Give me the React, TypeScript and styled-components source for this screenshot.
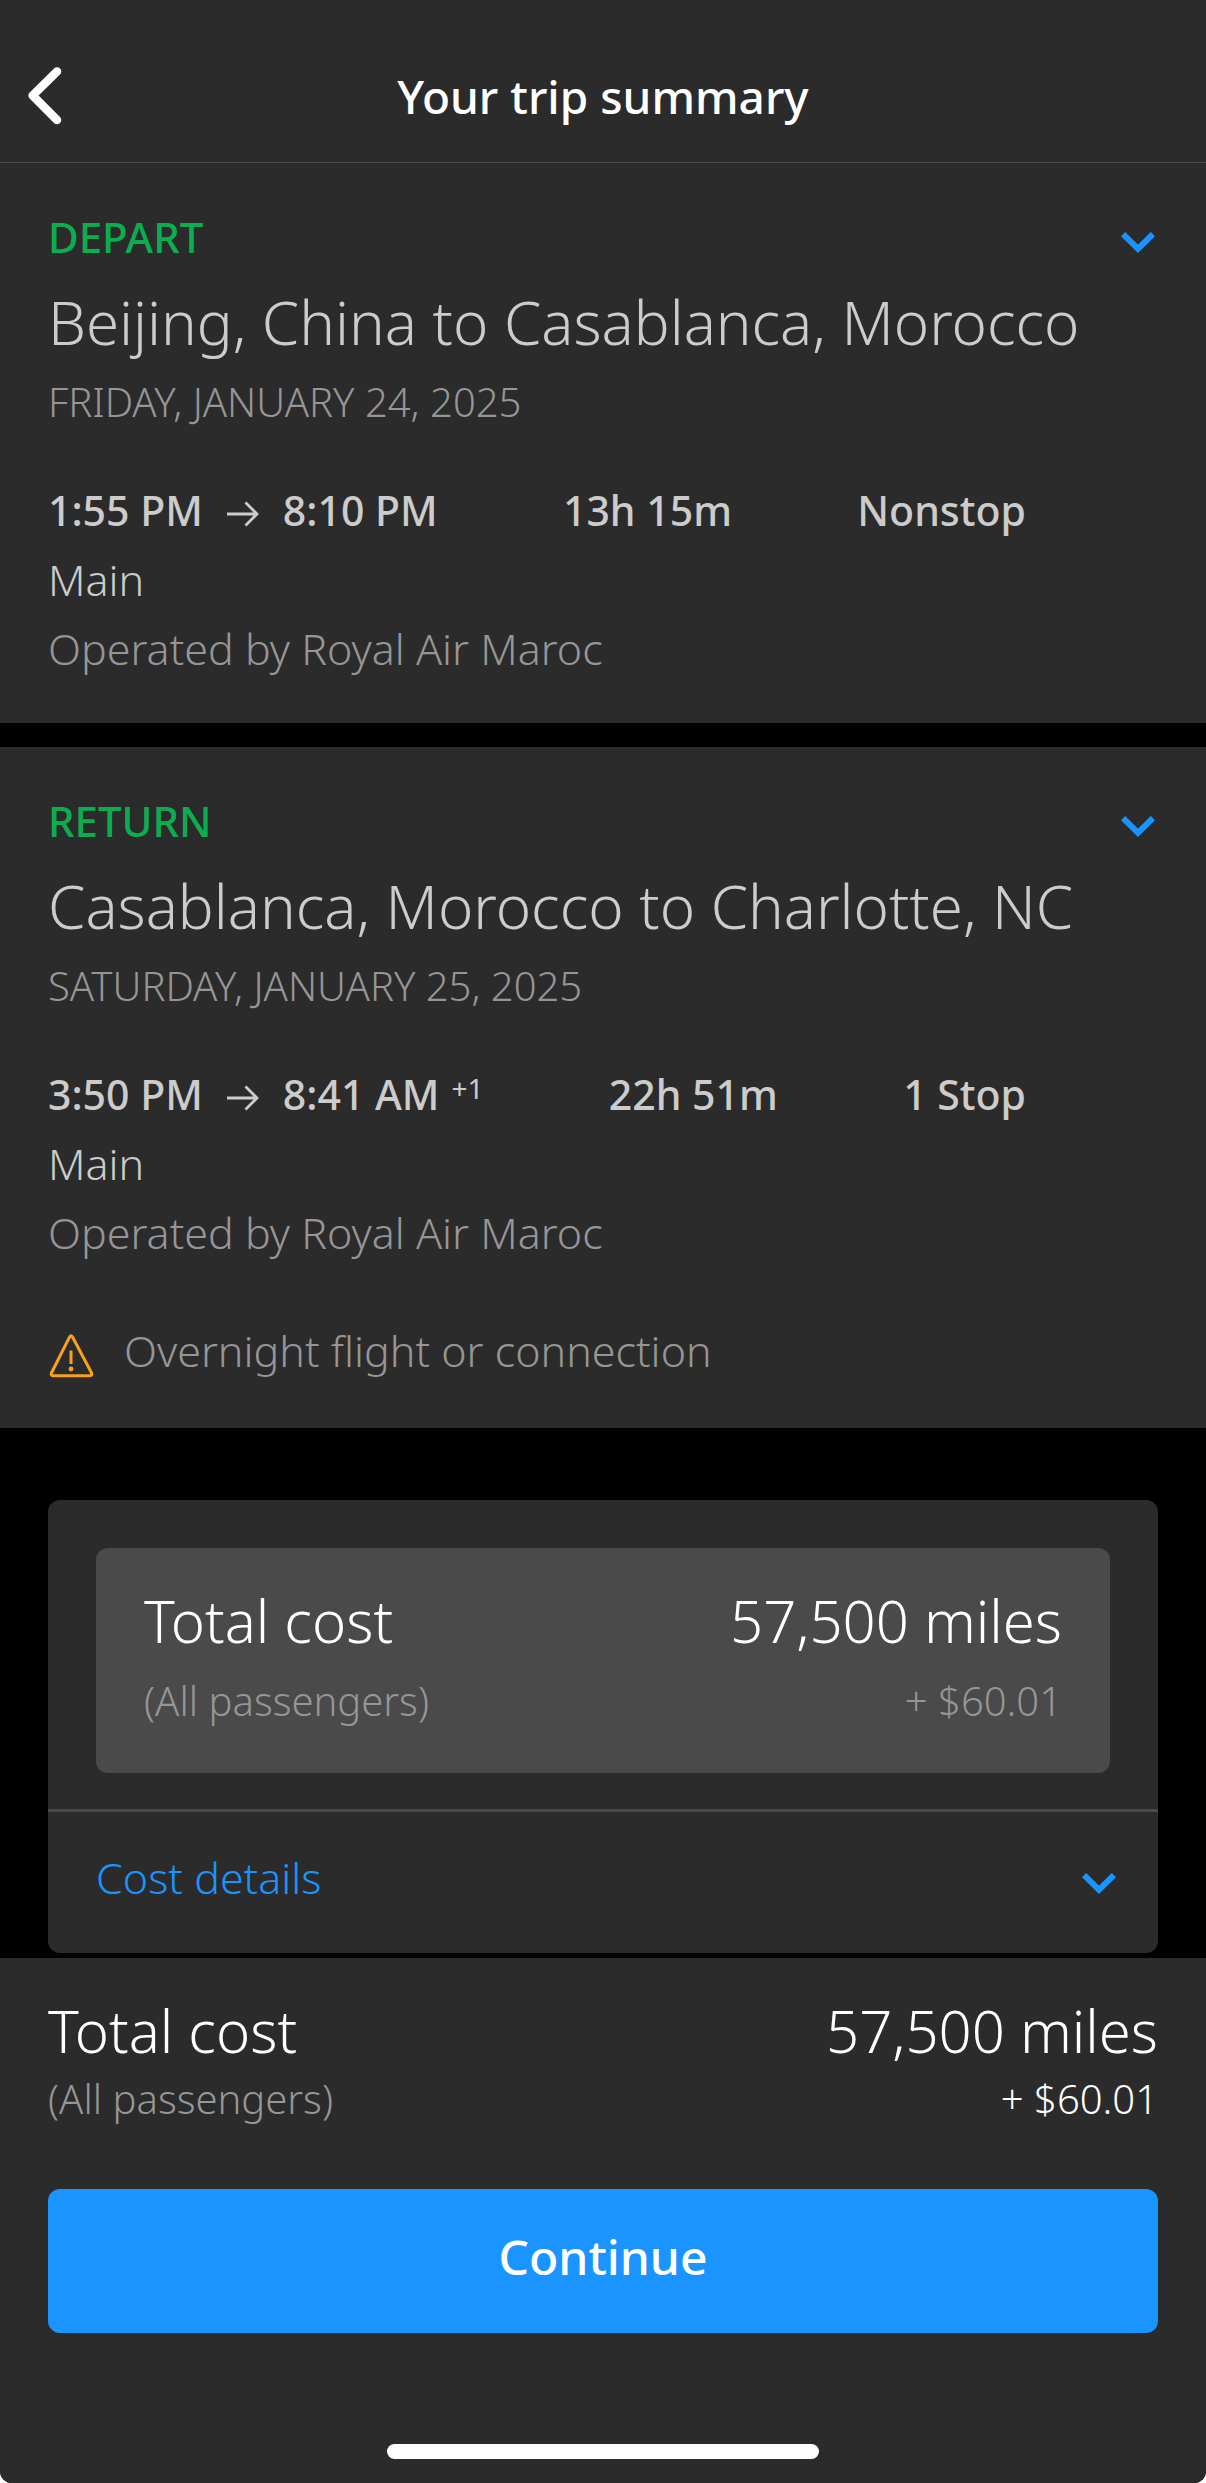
import React from 'react';
import styled, { createGlobalStyle } from 'styled-components';

const color = {
  page: '#000000',
  panel: '#2b2b2b',
  raised: '#4a4a4a',
  blue: '#1a94ff',
  green: '#0cad50',
  amber: '#f9a11b',
  white: '#ffffff',
  text: '#cccccc',
  muted: '#969696',
};

const GlobalStyle = createGlobalStyle`
  *, *::before, *::after { box-sizing: border-box; }
  body {
    margin: 0;
    background: ${color.white};
    font-family: "Noto Sans", "Open Sans", sans-serif;
    font-weight: 300;
    color: ${color.text};
  }
  h1, h2, h3, p { margin: 0; font-weight: inherit; }
  button {
    border: 0;
    padding: 0;
    background: none;
    font: inherit;
    color: inherit;
    cursor: pointer;
  }
  svg { display: block; }
`;

const Screen = styled.div`
  display: flex;
  flex-direction: column;
  min-height: 100vh;
  background: ${color.page};
  border-radius: 0 0 12px 12px;
  overflow: hidden;
`;

const Header = styled.header`
  display: grid;
  grid-template-columns: 1fr auto 1fr;
  align-items: center;
  padding: 66px 24px 36px;
  background: ${color.panel};
  border-bottom: 1px solid ${color.raised};
`;

const BackButton = styled.button`
  justify-self: start;
  padding: 0 4px;
`;

const Title = styled.h1`
  font-size: 46px;
  font-weight: 500;
  line-height: 60px;
  color: ${color.white};
`;

const Trips = styled.main`
  display: flex;
  flex-direction: column;
  gap: 24px;
`;

const Trip = styled.section`
  padding: 44px 48px 40px;
  background: ${color.panel};
`;

const TripTop = styled.div`
  display: flex;
  justify-content: space-between;
`;

const Direction = styled.h2`
  font-size: 42px;
  font-weight: 500;
  line-height: 60px;
  color: ${color.green};
`;

const ToggleButton = styled.button`
  padding: 10px 3px 0;
`;

const Route = styled.h3`
  margin-top: 15px;
  font-size: 60px;
  line-height: 80px;
`;

const TripDate = styled.p`
  margin-top: 10px;
  font-size: 40px;
  line-height: 60px;
  color: ${color.muted};
  text-transform: uppercase;
`;

const Facts = styled.div`
  display: flex;
  justify-content: space-between;
  margin-top: 44px;
  padding-right: 132px;
  font-size: 41px;
  font-weight: 500;
  line-height: 69px;
`;

const Times = styled.div`
  display: flex;
  align-items: center;
  gap: 24px;
`;

const DayShift = styled.sup`
  margin-left: 12px;
  font-size: 28px;
  font-weight: 400;
  line-height: 28px;
  vertical-align: 11px;
`;

const Line = styled.p<{ $muted?: boolean }>`
  font-size: 43px;
  line-height: 69px;
  color: ${p => (p.$muted ? color.muted : color.text)};
`;

const Notice = styled.div`
  display: flex;
  align-items: center;
  gap: 30px;
  margin-top: 49px;
  padding-bottom: 3px;

  svg { margin-top: 10px; }
`;

const CostArea = styled.div`
  padding: 72px 48px 5px;
`;

const Card = styled.section`
  border-radius: 12px;
  background: ${color.panel};
`;

const CardBody = styled.div`
  padding: 48px 48px 36px;
`;

const CostBox = styled.div`
  padding: 37px 48px 42px;
  border-radius: 12px;
  background: ${color.raised};
`;

const CostGrid = styled.div<{ $gap: number }>`
  display: flex;
  flex-direction: column;
  gap: ${p => p.$gap}px;
`;

const CostRow = styled.div`
  display: flex;
  justify-content: space-between;
`;

const Total = styled.span`
  font-size: 58px;
  line-height: 72px;
  color: ${color.white};
`;

const Detail = styled.span<{ $bright?: boolean }>`
  font-size: 40px;
  line-height: 60px;
  color: ${p => (p.$bright ? color.white : color.muted)};
`;

const CostDetails = styled.button`
  display: flex;
  justify-content: space-between;
  align-items: center;
  width: 100%;
  padding: 36px 42px 45px 48px;
  border-top: 3px solid ${color.raised};
  font-size: 43px;
  line-height: 60px;
  color: ${color.blue};

  svg { margin-top: 10px; }
`;

const Footer = styled.footer`
  flex: 1;
  padding: 37px 48px 24px;
  background: ${color.panel};
`;

const ContinueButton = styled.button`
  display: block;
  width: 100%;
  margin-top: 60px;
  padding: 36px 0 44px;
  border-radius: 12px;
  background: ${color.blue};
  font-size: 48px;
  font-weight: 500;
  line-height: 64px;
  color: ${color.white};
`;

const HomeIndicator = styled.div`
  width: 39%;
  height: 15px;
  margin: 111px auto 0;
  border-radius: 8px;
  background: ${color.white};
`;

const ChevronDown = () => (
  <svg width="34" height="21" viewBox="0 0 34 21" fill="none" stroke={color.blue} strokeWidth="6" aria-hidden="true">
    <path d="M2.1 2.1 17 16.8 31.9 2.1" />
  </svg>
);

const BackIcon = () => (
  <svg width="34" height="58" viewBox="0 0 34 58" fill="none" stroke={color.white} strokeWidth="8.5" strokeLinecap="round" strokeLinejoin="round" aria-hidden="true">
    <path d="M29 4.5 4.6 28.5 29 53" />
  </svg>
);

const ArrowIcon = () => (
  <svg width="32" height="32" viewBox="0 0 32 32" fill="none" stroke={color.text} strokeWidth="2.8" aria-label="to">
    <path d="M0 19H30M18.5 7.5 30 19 18.5 30.5" />
  </svg>
);

const WarningIcon = () => (
  <svg width="46" height="44" viewBox="0 0 46 44" fill="none" stroke={color.amber} strokeWidth="3" strokeLinejoin="round" aria-hidden="true">
    <path d="M21.6 2.8Q23 .8 24.4 2.8L43.6 39Q44.4 41.8 42 41.8H5Q2.6 41.8 3.4 39Z" />
    <path d="M23 16.5V30" />
    <circle cx="23" cy="35" r="2.4" fill={color.amber} stroke="none" />
  </svg>
);

interface Flight {
  direction: string;
  route: string;
  date: string;
  departs: string;
  arrives: string;
  dayShift?: string;
  duration: string;
  stops: string;
  notice?: string;
}

const flights: Flight[] = [
  {
    direction: 'DEPART',
    route: 'Beijing, China to Casablanca, Morocco',
    date: 'Friday, January 24, 2025',
    departs: '1:55 PM',
    arrives: '8:10 PM',
    duration: '13h 15m',
    stops: 'Nonstop',
  },
  {
    direction: 'RETURN',
    route: 'Casablanca, Morocco to Charlotte, NC',
    date: 'Saturday, January 25, 2025',
    departs: '3:50 PM',
    arrives: '8:41 AM',
    dayShift: '+1',
    duration: '22h 51m',
    stops: '1 Stop',
    notice: 'Overnight flight or connection',
  },
];

const Costs = ({ gap, bright }: { gap: number; bright?: boolean }) => (
  <CostGrid $gap={gap}>
    <CostRow>
      <Total>Total cost</Total>
      <Total>57,500 miles</Total>
    </CostRow>
    <CostRow>
      <Detail>(All passengers)</Detail>
      <Detail $bright={bright}>+ $60.01</Detail>
    </CostRow>
  </CostGrid>
);

export default function App() {
  return (
    <>
      <GlobalStyle />
      <Screen>
        <Header>
          <BackButton aria-label="Back">
            <BackIcon />
          </BackButton>
          <Title>Your trip summary</Title>
        </Header>
        <Trips>
          {flights.map(f => (
            <Trip key={f.direction}>
              <TripTop>
                <Direction>{f.direction}</Direction>
                <ToggleButton aria-label={`Show ${f.direction.toLowerCase()} details`}>
                  <ChevronDown />
                </ToggleButton>
              </TripTop>
              <Route>{f.route}</Route>
              <TripDate>{f.date}</TripDate>
              <Facts>
                <Times>
                  <span>{f.departs}</span>
                  <ArrowIcon />
                  <span>
                    {f.arrives}
                    {f.dayShift && <DayShift>{f.dayShift}</DayShift>}
                  </span>
                </Times>
                <span>{f.duration}</span>
                <span>{f.stops}</span>
              </Facts>
              <Line>Main</Line>
              <Line $muted>Operated by Royal Air Maroc</Line>
              {f.notice && (
                <Notice>
                  <WarningIcon />
                  <Line $muted>{f.notice}</Line>
                </Notice>
              )}
            </Trip>
          ))}
        </Trips>
        <CostArea>
          <Card>
            <CardBody>
              <CostBox>
                <Costs gap={14} />
              </CostBox>
            </CardBody>
            <CostDetails>
              <span>Cost details</span>
              <ChevronDown />
            </CostDetails>
          </Card>
        </CostArea>
        <Footer>
          <Costs gap={2} bright />
          <ContinueButton>Continue</ContinueButton>
          <HomeIndicator />
        </Footer>
      </Screen>
    </>
  );
}
